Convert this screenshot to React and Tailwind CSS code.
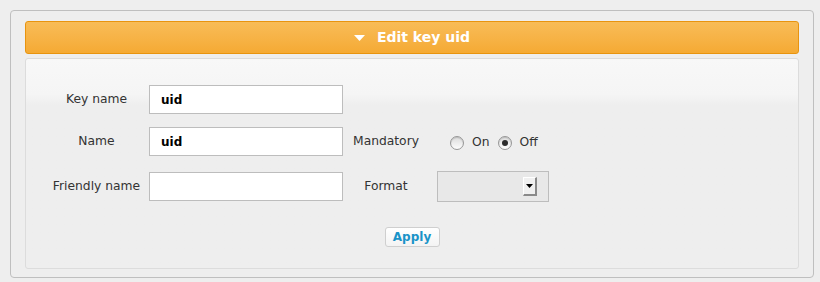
import React from 'react';

// Radio bullet drawn as spans
const Radio = ({ checked }) => (
  <span className="inline-flex items-center justify-center w-[14px] h-[14px] rounded-full border border-[#979797] bg-gradient-to-b from-[#dcdcdc] to-[#fdfdfd] shadow-[inset_0_1px_1px_rgba(0,0,0,0.15)]">
    {checked && <span className="w-[6px] h-[6px] rounded-full bg-[#2b2b2b]" />}
  </span>
);

const Field = ({ value }) => (
  <div className="w-[194px] h-[29px] border border-[#bdbdbd] bg-white flex items-center pl-[11px] font-bold text-[12px] text-black">
    {value}
  </div>
);

const App = () => {
  return (
    <div className="w-[820px] h-[282px] bg-[#eeeeee] pt-[10px] pl-[10px] text-[12.3px] text-[#333] [font-family:'DejaVu_Sans',sans-serif]">
      <div className="w-[804px] h-[268px] border border-[#bfbfbf] rounded-[4px] pt-[10px] px-[14px]">
        {/* Header */}
        <div className="h-[33px] rounded-[3px] border border-[#e8940f] bg-gradient-to-b from-[#f8bc57] to-[#f5aa33] flex items-center justify-center gap-[12px] text-white font-bold text-[14px]">
          <svg width="11" height="6" viewBox="0 0 11 6">
            <path d="M0 0 H11 L5.5 6 Z" fill="#fff" />
          </svg>
          <span>Edit key uid</span>
        </div>

        {/* Content */}
        <div className="mt-[4px] h-[211px] rounded-[3px] border border-[#dcdcdc] bg-gradient-to-b from-[#f8f8f8] from-0% via-[#f5f5f5] via-[17%] to-[#eeeeee] to-[22%] pl-[18px] pt-[26px]">
          <div className="flex items-center">
            <div className="w-[105px] text-center">Key name</div>
            <Field value="uid" />
          </div>

          <div className="flex items-center mt-[13px]">
            <div className="w-[105px] text-center">Name</div>
            <Field value="uid" />
            <div className="w-[86px] text-center">Mandatory</div>
            <div className="flex items-center ml-[21px] pt-[2px]">
              <Radio />
              <span className="ml-[8px]">On</span>
              <span className="ml-[9px] flex"><Radio checked /></span>
              <span className="ml-[7px]">Off</span>
            </div>
          </div>

          <div className="flex items-center mt-[15px]">
            <div className="w-[105px] text-center">Friendly name</div>
            <Field value="" />
            <div className="w-[86px] text-center">Format</div>
            <div className="ml-[8px] w-[112px] h-[31px] border border-[#bdbdbd] bg-[#e8e8e8] flex items-center justify-end pr-[11px]">
              <div className="w-[14px] h-[19px] bg-[#f0f0f0] border-t border-l border-t-white border-l-white border-r-2 border-b-2 border-r-[#8a8a8a] border-b-[#8a8a8a] flex items-center justify-center">
                <svg width="7" height="4" viewBox="0 0 7 4">
                  <path d="M0 0 H7 L3.5 4 Z" fill="#000" />
                </svg>
              </div>
            </div>
          </div>

          <div className="flex justify-center mt-[25px] pr-[18px]">
            <button className="w-[55px] h-[20px] rounded-[3px] border border-[#cfcfcf] bg-gradient-to-b from-white to-[#f3f3f3] text-[#1a93c8] font-bold text-[12px] leading-none">
              Apply
            </button>
          </div>
        </div>
      </div>
    </div>
  );
};

export default App;
